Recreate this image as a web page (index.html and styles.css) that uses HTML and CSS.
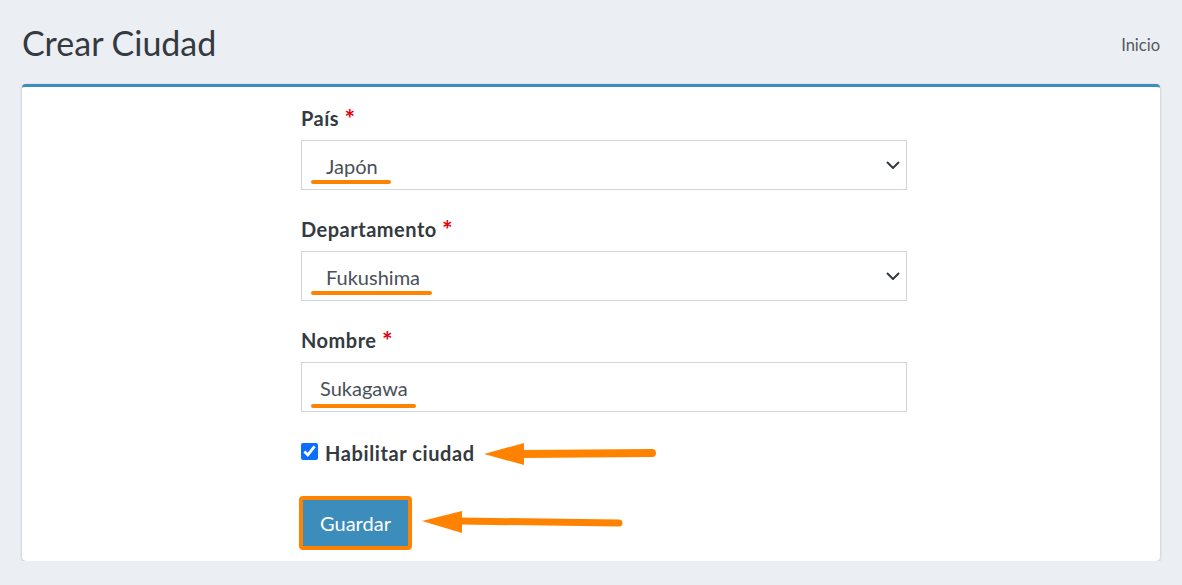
FILE: index.html
```html
<!DOCTYPE html>
<html lang="es">
<head>
    <meta charset="UTF-8">
    <meta name="viewport" content="width=device-width, initial-scale=1.0">
    <title>Crear Ciudad</title>
    <link rel="stylesheet" href="styles.css">
</head>
<body>

    <div class="page">
        <header class="page-header">
            <h1>Crear Ciudad</h1>
            <span class="crumb">Inicio</span>
        </header>

        <section class="card">
            <form class="city-form">
                <div class="group">
                    <label>País <span class="req">*</span></label>
                    <div class="field select">
                        <span class="value">Japón</span>
                        <svg class="chevron" width="14" height="8" viewBox="0 0 14 8"><path d="M1 1l6 6 6-6" fill="none" stroke="#343a40" stroke-width="2"/></svg>
                        <span class="mark mark-pais"></span>
                    </div>
                </div>

                <div class="group">
                    <label>Departamento <span class="req">*</span></label>
                    <div class="field select">
                        <span class="value">Fukushima</span>
                        <svg class="chevron" width="14" height="8" viewBox="0 0 14 8"><path d="M1 1l6 6 6-6" fill="none" stroke="#343a40" stroke-width="2"/></svg>
                        <span class="mark mark-depto"></span>
                    </div>
                </div>

                <div class="group">
                    <label>Nombre <span class="req">*</span></label>
                    <div class="field input">
                        <span class="value">Sukagawa</span>
                        <span class="mark mark-nombre"></span>
                    </div>
                </div>

                <div class="check-row">
                    <input type="checkbox" checked>
                    <span class="check-label">Habilitar ciudad</span>
                    <svg class="arrow" width="174" height="26" viewBox="0 0 174 26">
                        <polygon points="1,13 41,2 41,24" fill="#ff8300"/>
                        <line x1="38" y1="13" x2="169" y2="12" stroke="#ff8300" stroke-width="8" stroke-linecap="round"/>
                    </svg>
                </div>

                <div class="actions">
                    <button type="button">Guardar</button>
                    <svg class="arrow" width="204" height="26" viewBox="0 0 204 26">
                        <polygon points="1,12 41,2 41,24" fill="#ff8300"/>
                        <line x1="38" y1="12" x2="198" y2="14" stroke="#ff8300" stroke-width="7" stroke-linecap="round"/>
                    </svg>
                </div>
            </form>
        </section>
    </div>

</body>
</html>
```

FILE: styles.css
```css
body {
    margin: 0;
    background-color: #ebeef3;
    font-family: Lato, "Noto Sans", sans-serif;
    color: #343a40;
}
.page {
    padding: 0 22px;
}
.page-header {
    display: flex;
    justify-content: space-between;
    align-items: center;
    height: 84px;
}
.page-header h1 {
    margin: 0;
    font-size: 34px;
    font-weight: 400;
    color: #343a40;
}
.crumb {
    margin-top: 6px;
    font-size: 16.5px;
    color: #55595e;
}
.card {
    background-color: #fff;
    border-top: 3px solid #3c8dbc;
    border-radius: 4px;
    box-shadow: 0 0 1px rgba(0, 0, 0, 0.125), 0 1px 3px rgba(0, 0, 0, 0.2);
    padding: 19px 0 11px;
}
.city-form {
    margin-left: 279px;
    width: 606px;
}
.group {
    margin-bottom: 27px;
}
label {
    display: block;
    height: 24px;
    font-size: 20px;
    font-weight: 700;
    letter-spacing: 0.5px;
    line-height: 24px;
    margin-bottom: 10px;
}
.req {
    position: relative;
    top: 2px;
    font-size: 25px;
    line-height: 0;
    color: #e5000c;
}
.field {
    position: relative;
    display: flex;
    align-items: center;
    justify-content: space-between;
    height: 50px;
    box-sizing: border-box;
    border: 1px solid #d3d3dd;
    font-size: 20px;
    color: #495057;
}
.select {
    padding: 0 6px 0 24px;
}
.input {
    padding: 0 18px;
}
.value {
    margin-top: 1px;
}
.mark {
    position: absolute;
    top: 39px;
    left: 9px;
    height: 4px;
    border-radius: 2px;
    background-color: #ff8300;
}
.mark-pais {
    width: 80px;
}
.mark-depto {
    width: 121px;
}
.mark-nombre {
    top: 41px;
    width: 105px;
}
.check-row {
    display: flex;
    align-items: center;
    height: 24px;
    margin-top: 2px;
}
.check-row input {
    width: 17px;
    height: 17px;
    margin: 0 7px 0 0;
    accent-color: #0d6efd;
}
.check-label {
    font-size: 20px;
    font-weight: 700;
    letter-spacing: 0.6px;
    margin-top: 3px;
}
.check-row .arrow {
    margin-left: 8px;
    margin-top: 6px;
}
.actions {
    display: flex;
    align-items: center;
    margin-top: 33px;
}
button {
    width: 113px;
    height: 54px;
    margin-left: -2px;
    background-color: #3c8dbc;
    border: 4px solid #ff8300;
    border-radius: 4px;
    color: #fff;
    font-family: Lato, "Noto Sans", sans-serif;
    font-size: 20px;
}
.actions .arrow {
    margin-left: 9px;
    margin-top: -2px;
}
```
